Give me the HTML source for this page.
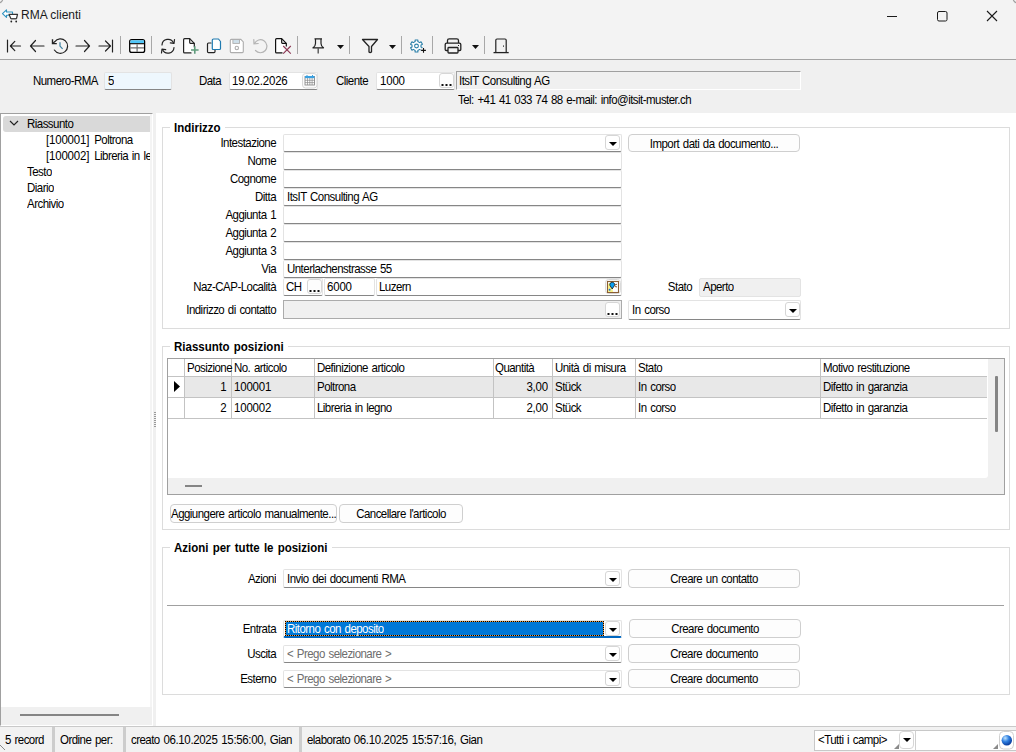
<!DOCTYPE html>
<html><head><meta charset="utf-8">
<style>
html,body{margin:0;padding:0;width:1016px;height:752px;overflow:hidden;background:#f3f3f3}
*{box-sizing:border-box}
body{font-family:"Liberation Sans",sans-serif;font-size:11.5px;color:#000;position:relative}
.a{position:absolute}
.t{position:absolute;white-space:nowrap;line-height:14px;letter-spacing:-0.54px;word-spacing:1px;transform:scaleY(1.13);transform-origin:0 11px}
.bt{display:inline-block;transform:scaleY(1.13);transform-origin:0 11px;letter-spacing:-0.54px;word-spacing:1px}
.r{text-align:right}
.n{letter-spacing:-0.2px}
.n2{letter-spacing:-0.35px}
.b{font-weight:bold;letter-spacing:0}
.inp{position:absolute;background:#fff;border:1px solid #e3e3e3;border-bottom:1px solid #868686;border-radius:2px}
.ro{position:absolute;background:#f0f0f0;border:1px solid #e3e3e3;border-radius:2px}
.btn{position:absolute;background:#fdfdfd;border:1px solid #cfcfcf;border-radius:4px;text-align:center;line-height:18px;white-space:nowrap}
.dd{position:absolute;background:#fff;border:1px solid #d6d6d6;border-radius:3px;width:15px;height:15px}
.dd:after{content:"";position:absolute;left:3px;top:6px;border-left:4px solid transparent;border-right:4px solid transparent;border-top:4px solid #000}
.gb{position:absolute;border:1px solid #dcdcdc}
.gt{position:absolute;background:#fff;padding:0 4px 0 4px;font-weight:bold;line-height:14px;white-space:nowrap;word-spacing:1px;transform:scaleY(1.12);transform-origin:0 11px}
.sep{position:absolute;width:1px;background:#a8a8a8}
</style></head><body>
<!-- title bar -->
<svg class="a" style="left:0;top:0" width="1016" height="30">
  <path d="M0.5 3 Q1 1 3 0.5" stroke="#9a9a9a" stroke-width="1.2" fill="none"/>
  <path d="M1013 0.5 Q1015 1 1015.5 3" stroke="#9a9a9a" stroke-width="1.2" fill="none"/>
  <!-- app icon: arrow + cart -->
  <path d="M6.5 9.8 L2.5 13.6 L6.5 17.4 L6.5 15.3 L12.5 15.3 L12.5 12 L6.5 12 Z" fill="#fff" stroke="#2f93c0" stroke-width="1.1" stroke-linejoin="round"/>
  <path d="M9 14.3 L17.5 14.3 L16.5 18.5 L10.8 18.5 Z" fill="#fff" stroke="#333" stroke-width="1.2" stroke-linejoin="round"/>
  <rect x="10.8" y="18.2" width="5.7" height="1.3" fill="#555"/>
  <circle cx="11.3" cy="21.5" r="0.9" fill="#222"/><circle cx="16.2" cy="21.5" r="0.9" fill="#222"/>
  <!-- window controls -->
  <rect x="887" y="16" width="10" height="1" fill="#1a1a1a"/>
  <rect x="937.5" y="11.5" width="9.5" height="9.5" rx="1.5" fill="none" stroke="#1a1a1a" stroke-width="1"/>
  <path d="M987 11 L997 21 M997 11 L987 21" stroke="#1a1a1a" stroke-width="1.1"/>
</svg>
<div class="t" style="left:21px;top:8px;font-size:12px;letter-spacing:0;word-spacing:0;transform:none;color:#1a1a1a">RMA clienti</div>

<!-- toolbar -->
<svg class="a" style="left:0;top:30px" width="520" height="29" viewBox="0 30 520 29">
  <g fill="none" stroke="#222" stroke-width="1.2" stroke-linecap="round" stroke-linejoin="round">
    <!-- |<- -->
    <path d="M7.5 40 V52"/><path d="M11 46 H20.5 M14.8 41.4 L10.4 46 L14.8 50.6"/>
    <!-- <- -->
    <path d="M30.5 46 H44 M35.5 40.5 L30.5 46 L35.5 51.5"/>
    <!-- history -->
    <path d="M54.36 50.02 A7.2 7.2 0 1 0 54.65 41.77 L52.8 43.4"/><path d="M52.5 39.3 V43.6 H56.8" stroke-linecap="butt" stroke-linejoin="miter" stroke-width="1.4"/>
    <path d="M60 42.3 V46.2 L62.6 48.8" stroke="#3a7fa0" stroke-linecap="butt"/>
    <!-- -> -->
    <path d="M76 46 H89.5 M84.5 40.5 L89.5 46 L84.5 51.5"/>
    <!-- ->| -->
    <path d="M99 46 H110 M105.5 41 L110.5 46 L105.5 51"/><path d="M112.5 40 V52"/>
  </g>
  <rect x="120" y="36" width="1" height="18" fill="#a8a8a8"/>
  <!-- table -->
  <rect x="129.7" y="39.6" width="14.9" height="12.8" rx="2" fill="#fff" stroke="#000" stroke-width="1.3"/>
  <rect x="130.4" y="40.3" width="13.5" height="2.9" fill="#4fc6f8"/>
  <path d="M130 43.7 H144.3" stroke="#000" stroke-width="1.1"/>
  <path d="M130.3 47.9 H144 M137.1 44.2 V52" stroke="#6e6e6e" stroke-width="1.2"/>
  <rect x="151" y="36" width="1" height="18" fill="#a8a8a8"/>
  <g fill="none" stroke="#222" stroke-width="1.2" stroke-linecap="round" stroke-linejoin="round">
    <!-- refresh -->
    <path d="M162 45 A6 6 0 0 1 173.5 43"/><path d="M174.5 39.5 L174 43.3 L170.3 42.8"/>
    <path d="M174 47.5 A6 6 0 0 1 162.5 49.5"/><path d="M161.5 53 L162 49.2 L165.7 49.7"/>
    <!-- new doc -->
    <path d="M191 52.9 H184.6 Q183.6 52.9 183.6 51.9 V39.7 Q183.6 38.7 184.6 38.7 H189.7 L194.3 43.3 V47" fill="#fff"/><path d="M189.7 38.9 V42.6 Q189.7 43.3 190.4 43.3 H194.2"/>
    <!-- copy -->
    <path d="M211 43 H208.5 Q207.5 43 207.5 44 V51.5 Q207.5 52.7 208.5 52.7 H214 Q215 52.7 215 51.5 V50"/>
  </g>
  <path d="M194.8 46.3 V53.7 M191 50 H198.6" stroke="#5f9c7c" stroke-width="1.6"/>
  <path d="M213 49.5 H219.5 Q220.5 49.5 220.5 48.5 V41.5 L218.5 39 H213.5 Q212.3 39 212.3 40 V48.5 Q212.3 49.5 213 49.5 Z" fill="#fff" stroke="#1f7ab0" stroke-width="1.2" stroke-linejoin="round"/>
  <!-- save (disabled) -->
  <path d="M231.3 39.4 H240.8 L243.3 41.9 V51.6 Q243.3 52.6 242.3 52.6 H231.3 Q230.3 52.6 230.3 51.6 V40.4 Q230.3 39.4 231.3 39.4 Z" fill="#fff" stroke="#adadad" stroke-width="1.1"/>
  <rect x="232.9" y="39.6" width="6.6" height="3.8" fill="#cfe0ea" stroke="#adadad" stroke-width="0.9"/>
  <circle cx="236.8" cy="48" r="1.7" fill="none" stroke="#adadad" stroke-width="1.1"/>
  <!-- undo (disabled) -->
  <path d="M254.5 43.5 A6.5 6.5 0 1 1 255.5 50.5" fill="none" stroke="#b4b4b4" stroke-width="1.2" stroke-linecap="round"/>
  <path d="M253.8 39.5 L254 43.8 L258.2 43.5" fill="none" stroke="#b4b4b4" stroke-width="1.2" stroke-linecap="round"/>
  <!-- delete doc -->
  <g fill="none" stroke="#111" stroke-width="1.2" stroke-linejoin="round">
    <path d="M282.5 52.9 H276.6 Q275.6 52.9 275.6 51.9 V39.7 Q275.6 38.7 276.6 38.7 H281.7 L286.3 43.3 V46.5" fill="#fff"/><path d="M281.7 38.9 V42.6 Q281.7 43.3 282.4 43.3 H286.2"/>
  </g>
  <path d="M283.2 46 L290.8 53.6 M290.8 46 L283.2 53.6" stroke="#8b3552" stroke-width="1.1"/>
  <rect x="297" y="36" width="1" height="18" fill="#a8a8a8"/>
  <!-- pin -->
  <path d="M314.5 38.8 H322 M315.5 39 V43.5 Q315.5 46 313 47.8 H323.5 Q321 46 321 43.5 V39" fill="none" stroke="#222" stroke-width="1.2" stroke-linejoin="round"/>
  <path d="M318.2 48 V53.5" stroke="#555" stroke-width="1.4"/>
  <path d="M337 45 H344 L340.5 49 Z" fill="#111"/>
  <rect x="349" y="36" width="1" height="18" fill="#a8a8a8"/>
  <!-- filter -->
  <path d="M362.5 39.5 H377.5 L371.5 46.5 V52 Q370 53 369 52 V46.5 Z" fill="none" stroke="#222" stroke-width="1.3" stroke-linejoin="round"/>
  <path d="M389 45 H396 L392.5 49 Z" fill="#111"/>
  <rect x="401" y="36" width="1" height="18" fill="#a8a8a8"/>
  <!-- gear -->
  <path d="M415.11 39.96 L417.89 39.96 L417.84 41.60 L419.64 42.64 L421.03 41.77 L422.43 44.19 L420.98 44.97 L420.98 47.03 L422.43 47.81 L421.03 50.23 L419.64 49.36 L417.84 50.40 L417.89 52.04 L415.11 52.04 L415.16 50.40 L413.36 49.36 L411.97 50.23 L410.57 47.81 L412.02 47.03 L412.02 44.97 L410.57 44.19 L411.97 41.77 L413.36 42.64 L415.16 41.60 Z" fill="#fff" stroke="#2a7fa8" stroke-width="1.1" stroke-linejoin="round"/>
  <circle cx="416.5" cy="46" r="1.9" fill="none" stroke="#2a7fa8" stroke-width="1.1"/>
  <circle cx="423.5" cy="50.4" r="3" fill="#f3f3f3"/>
  <path d="M423.5 48 V52.8 M421.1 50.4 H425.9" stroke="#111" stroke-width="1.1"/>
  <rect x="432" y="36" width="1" height="18" fill="#a8a8a8"/>
  <!-- printer -->
  <g fill="none" stroke="#222" stroke-width="1.3" stroke-linejoin="round">
    <path d="M447.5 43 V40.5 Q447.5 38.8 449.2 38.8 H456.8 Q458.5 38.8 458.5 40.5 V43"/>
    <path d="M448 50.5 H446.3 Q445.2 50.5 445.2 49.4 V44.6 Q445.2 43.2 446.6 43.2 H459.4 Q460.8 43.2 460.8 44.6 V49.4 Q460.8 50.5 459.7 50.5 H458"/>
    <rect x="448" y="47.5" width="10" height="5.5" rx="0.8"/>
  </g>
  <rect x="458" y="45" width="1" height="1" fill="#222"/>
  <path d="M472 45 H479 L475.5 49 Z" fill="#111"/>
  <rect x="484" y="36" width="1" height="18" fill="#a8a8a8"/>
  <!-- door -->
  <path d="M495.8 52.5 V40.3 Q495.8 39 497 39 H505 Q506.2 39 506.2 40.3 V52.5" fill="none" stroke="#222" stroke-width="1.2"/>
  <path d="M493.5 52.6 H508.7" stroke="#222" stroke-width="1.3"/>
  <rect x="503" y="45.5" width="1" height="1.2" fill="#222"/>
</svg>
<div class="a" style="left:0;top:59px;width:1016px;height:1px;background:#a3a3a3"></div>

<!-- header panel -->
<div class="a" style="left:0;top:60px;width:1016px;height:53px;background:#f0f0f0"></div>
<div class="t" style="left:33px;top:74px">Numero-RMA</div>
<div class="inp" style="left:104px;top:72px;width:68px;height:18px;background:#eef7fd"></div>
<div class="t" style="left:108px;top:74px">5</div>
<div class="t" style="left:199px;top:74px">Data</div>
<div class="inp" style="left:229px;top:72px;width:89px;height:18px"></div>
<div class="t n" style="left:232px;top:74px">19.02.2026</div>
<svg class="a" style="left:302px;top:73px" width="16" height="16">
  <rect x="0.5" y="0.5" width="14.5" height="14.5" rx="3" fill="#fbfbfb" stroke="#d8d8d8"/>
  <rect x="3" y="3.5" width="9.5" height="8.5" fill="#fff" stroke="#8a8a8a" stroke-width="0.9"/>
  <rect x="3" y="3" width="9.5" height="2.2" fill="#3aa0e0"/>
  <path d="M3 7.3 H12.5 M3 9.6 H12.5 M5.5 5 V12 M7.8 5 V12 M10.1 5 V12" stroke="#8a8a8a" stroke-width="0.7"/>
  <path d="M5 2 V4 M10.5 2 V4" stroke="#3aa0e0" stroke-width="1"/>
</svg>
<div class="t" style="left:336px;top:74px">Cliente</div>
<div class="inp" style="left:376px;top:72px;width:79px;height:18px"></div>
<div class="t n" style="left:380px;top:74px">1000</div>
<div class="a" style="left:439px;top:73px;width:15px;height:15px;background:#fdfdfd;border:1px solid #d6d6d6;border-radius:3px"></div>
<svg class="a" style="left:441px;top:84px" width="12" height="3"><rect x="0.5" y="0" width="2" height="2" fill="#111"/><rect x="4.5" y="0" width="2" height="2" fill="#111"/><rect x="8.5" y="0" width="2" height="2" fill="#111"/></svg>
<div class="a" style="left:456px;top:71px;width:345px;height:19px;background:#f0f0f0;border-top:1px solid #a0a0a0;border-left:1px solid #a0a0a0;border-bottom:1px solid #fff;border-right:1px solid #fff"></div>
<div class="t" style="left:459px;top:74px">ItsIT Consulting AG</div>
<div class="t" style="left:458px;top:93px">Tel: +41 41 033 74 88 e-mail: info@itsit-muster.ch</div>

<!-- TREE -->
<div class="a" style="left:0;top:113px;width:153px;height:613px;background:#fff;border-top:1px solid #a0a0a0;border-left:1px solid #a0a0a0;border-right:1px solid #fff;border-bottom:1px solid #fff"></div>
<div class="a" style="left:150px;top:114px;width:2px;height:593px;background:#f4f4f4"></div>
<div class="a" style="left:3px;top:116px;width:147px;height:16px;background:#d9d9d9;border-radius:3px 0 0 3px"></div>
<svg class="a" style="left:9px;top:119px" width="11" height="9"><path d="M1 2 L5 6 L9 2" fill="none" stroke="#222" stroke-width="1.2"/></svg>
<div class="t" style="left:27px;top:117px">Riassunto</div>
<div class="t" style="left:46px;top:133px"><span class="n">[100001]</span><span style="margin-left:5px">Poltrona</span></div>
<div class="a" style="left:46px;top:149px;width:104px;height:16px;overflow:hidden"><div class="t" style="left:0;top:0"><span class="n">[100002]</span><span style="margin-left:5px">Libreria in legno</span></div></div>
<div class="t" style="left:27px;top:165px">Testo</div>
<div class="t" style="left:27px;top:181px">Diario</div>
<div class="t" style="left:27px;top:197px">Archivio</div>
<div class="a" style="left:1px;top:707px;width:151px;height:18px;background:#f0f0f0"></div>
<div class="a" style="left:20px;top:714px;width:99px;height:2px;background:#858585"></div>
<!-- splitter -->
<div class="a" style="left:153px;top:113px;width:3px;height:613px;background:#f0f0f0"></div>
<svg class="a" style="left:153px;top:411px" width="3" height="17"><g fill="#9a9a9a"><rect x="1" y="1" width="2" height="1"/><rect x="1" y="3" width="2" height="1"/><rect x="1" y="5" width="2" height="1"/><rect x="1" y="7" width="2" height="1"/><rect x="1" y="9" width="2" height="1"/><rect x="1" y="11" width="2" height="1"/><rect x="1" y="13" width="2" height="1"/><rect x="1" y="15" width="2" height="1"/></g></svg>
<!-- MAIN -->
<div class="a" style="left:156px;top:113px;width:860px;height:613px;background:#fff"></div>
<!-- GROUP1 -->
<div class="gb" style="left:162px;top:127px;width:848px;height:202px"></div>
<div class="gt" style="left:170px;top:121px">Indirizzo</div>
<div class="t r" style="left:126px;width:150px;top:136px">Intestazione</div>
<div class="t r" style="left:126px;width:150px;top:154px">Nome</div>
<div class="t r" style="left:126px;width:150px;top:172px">Cognome</div>
<div class="t r" style="left:126px;width:150px;top:190px">Ditta</div>
<div class="t r" style="left:126px;width:150px;top:208px">Aggiunta 1</div>
<div class="t r" style="left:126px;width:150px;top:226px">Aggiunta 2</div>
<div class="t r" style="left:126px;width:150px;top:244px">Aggiunta 3</div>
<div class="t r" style="left:126px;width:150px;top:262px">Via</div>
<div class="t r" style="left:126px;width:150px;top:280px">Naz-CAP-Località</div>
<div class="t r" style="left:126px;width:150px;top:303px">Indirizzo di contatto</div>
<div class="inp" style="left:283px;top:134px;width:339px;height:18px"></div>
<div class="dd" style="left:605px;top:135px"></div>
<div class="inp" style="left:283px;top:152px;width:339px;height:18px"></div>
<div class="inp" style="left:283px;top:170px;width:339px;height:18px"></div>
<div class="inp" style="left:283px;top:188px;width:339px;height:18px"></div>
<div class="t" style="left:287px;top:190px">ItsIT Consulting AG</div>
<div class="inp" style="left:283px;top:206px;width:339px;height:18px"></div>
<div class="inp" style="left:283px;top:224px;width:339px;height:18px"></div>
<div class="inp" style="left:283px;top:242px;width:339px;height:18px"></div>
<div class="inp" style="left:283px;top:260px;width:339px;height:18px"></div>
<div class="t" style="left:287px;top:262px">Unterlachenstrasse 55</div>
<div class="inp" style="left:283px;top:278px;width:40px;height:18px"></div>
<div class="t" style="left:286px;top:280px">CH</div>
<div class="a" style="left:307px;top:279px;width:15px;height:15px;background:#fdfdfd;border:1px solid #d6d6d6;border-radius:3px"></div>
<svg class="a" style="left:309px;top:290px" width="12" height="3"><rect x="0.5" y="0" width="2" height="2" fill="#111"/><rect x="4.5" y="0" width="2" height="2" fill="#111"/><rect x="8.5" y="0" width="2" height="2" fill="#111"/></svg>
<div class="inp" style="left:324px;top:278px;width:51px;height:18px"></div>
<div class="t n" style="left:327px;top:280px">6000</div>
<div class="inp" style="left:376px;top:278px;width:246px;height:18px"></div>
<div class="t" style="left:379px;top:280px">Luzern</div>
<svg class="a" style="left:605px;top:279px" width="16" height="15" viewBox="605 279 16 15">
  <rect x="605.5" y="279.5" width="15" height="14" rx="3" fill="#fbfbfb" stroke="#dadada"/>
  <rect x="607.5" y="281.5" width="11" height="11" fill="#fff" stroke="#8b5e34" stroke-width="1.1"/>
  <path d="M608 292 L608 284 L611.5 282 L613 292 Z" fill="#f6f08a"/>
  <path d="M612.2 289 L610 285.6 A2.4 2.4 0 1 1 614.4 285.6 Z" fill="#0a9ef0" stroke="#111" stroke-width="0.8"/>
  <circle cx="609.6" cy="289.8" r="1" fill="#1a6ee0"/>
  <path d="M617 284.6 A1.3 1.3 0 1 0 617 286.6" fill="none" stroke="#7a4a2a" stroke-width="1"/>
</svg>
<div class="ro" style="left:283px;top:300px;width:339px;height:19px;border:1px solid #ababab;border-radius:0"></div>
<div class="a" style="left:605px;top:302px;width:15px;height:15px;background:#fff;border:1px solid #d6d6d6;border-radius:3px"></div>
<svg class="a" style="left:607px;top:313px" width="12" height="3"><rect x="0.5" y="0" width="2" height="2" fill="#111"/><rect x="4.5" y="0" width="2" height="2" fill="#111"/><rect x="8.5" y="0" width="2" height="2" fill="#111"/></svg>
<div class="btn" style="left:628px;top:134px;width:172px;height:18px"><span class="bt">Import dati da documento...</span></div>
<div class="t r" style="left:592px;width:100px;top:280px">Stato</div>
<div class="ro" style="left:699px;top:278px;width:102px;height:19px"></div>
<div class="t" style="left:703px;top:280px">Aperto</div>
<div class="inp" style="left:628px;top:300px;width:173px;height:20px"></div>
<div class="t" style="left:632px;top:303px">In corso</div>
<div class="dd" style="left:785px;top:302px"></div>
<!-- GROUP2 -->
<div class="gb" style="left:162px;top:346px;width:848px;height:184px"></div>
<div class="gt" style="left:170px;top:340px">Riassunto posizioni</div>
<div class="a" style="left:167px;top:358px;width:838px;height:137px;border:1px solid #a0a0a0;background:#f0f0f0"></div>
<div class="a" style="left:168px;top:359px;width:820px;height:119px;background:#fff;border-bottom-right-radius:3px"></div>
<div class="a" style="left:185px;top:377px;width:802px;height:20px;background:#e8e8e8"></div>
<div class="a" style="left:168px;top:376px;width:819px;height:1px;background:#c3c3c3"></div>
<div class="a" style="left:168px;top:397px;width:819px;height:1px;background:#c3c3c3"></div>
<div class="a" style="left:168px;top:418px;width:819px;height:1px;background:#c3c3c3"></div>
<div class="a" style="left:184px;top:359px;width:1px;height:59px;background:#c3c3c3"></div>
<div class="a" style="left:231px;top:359px;width:1px;height:59px;background:#c3c3c3"></div>
<div class="a" style="left:314px;top:359px;width:1px;height:59px;background:#c3c3c3"></div>
<div class="a" style="left:493px;top:359px;width:1px;height:59px;background:#c3c3c3"></div>
<div class="a" style="left:552px;top:359px;width:1px;height:59px;background:#c3c3c3"></div>
<div class="a" style="left:635px;top:359px;width:1px;height:59px;background:#c3c3c3"></div>
<div class="a" style="left:820px;top:359px;width:1px;height:59px;background:#c3c3c3"></div>
<div class="t" style="left:187px;top:361px">Posizione</div>
<div class="t" style="left:234px;top:361px">No. articolo</div>
<div class="t" style="left:317px;top:361px">Definizione articolo</div>
<div class="t" style="left:495px;top:361px">Quantità</div>
<div class="t" style="left:555px;top:361px">Unità di misura</div>
<div class="t" style="left:638px;top:361px">Stato</div>
<div class="t" style="left:823px;top:361px">Motivo restituzione</div>
<svg class="a" style="left:173px;top:380px" width="9" height="13"><path d="M1 1 L7 6.5 L1 12 Z" fill="#000"/></svg>
<div class="t r" style="left:185px;width:41px;top:380px">1</div>
<div class="t n" style="left:234px;top:380px">100001</div>
<div class="t" style="left:317px;top:380px">Poltrona</div>
<div class="t r n" style="left:494px;width:54px;top:380px">3,00</div>
<div class="t" style="left:555px;top:380px">Stück</div>
<div class="t" style="left:638px;top:380px">In corso</div>
<div class="t" style="left:823px;top:380px">Difetto in garanzia</div>
<div class="t r" style="left:185px;width:41px;top:401px">2</div>
<div class="t n" style="left:234px;top:401px">100002</div>
<div class="t" style="left:317px;top:401px">Libreria in legno</div>
<div class="t r n" style="left:494px;width:54px;top:401px">2,00</div>
<div class="t" style="left:555px;top:401px">Stück</div>
<div class="t" style="left:638px;top:401px">In corso</div>
<div class="t" style="left:823px;top:401px">Difetto in garanzia</div>
<div class="a" style="left:995px;top:376px;width:3px;height:56px;background:#858585;border-radius:1px"></div>
<div class="a" style="left:185px;top:485px;width:17px;height:2px;background:#858585"></div>
<div class="btn" style="left:170px;top:504px;width:167px;height:19px;line-height:19px"><span class="bt">Aggiungere articolo manualmente...</span></div>
<div class="btn" style="left:339px;top:504px;width:124px;height:19px;line-height:19px"><span class="bt">Cancellare l'articolo</span></div>
<!-- GROUP3 -->
<div class="gb" style="left:162px;top:547px;width:848px;height:148px"></div>
<div class="gt" style="left:170px;top:541px">Azioni per tutte le posizioni</div>
<div class="t r" style="left:126px;width:150px;top:572px">Azioni</div>
<div class="inp" style="left:283px;top:569px;width:339px;height:19px"></div>
<div class="t" style="left:287px;top:572px">Invio dei documenti RMA</div>
<div class="dd" style="left:605px;top:571px"></div>
<div class="btn" style="left:628px;top:569px;width:172px;height:19px;line-height:19px"><span class="bt">Creare un contatto</span></div>
<div class="a" style="left:167px;top:605px;width:837px;height:1px;background:#a0a0a0"></div>
<div class="t r" style="left:126px;width:150px;top:622px">Entrata</div>
<div class="inp" style="left:283px;top:620px;width:339px;height:18px;border-bottom:2px solid #0067c0"></div>
<div class="a" style="left:285px;top:621px;width:319px;height:15px;background:#0078d7;border:1px solid #f39a3a"></div>
<div class="a" style="left:285px;top:621px;width:319px;height:15px;border:1px dotted #000"></div>
<div class="t" style="left:287px;top:622px;color:#fff">Ritorno con deposito</div>
<div class="dd" style="left:605px;top:621px"></div>
<div class="btn" style="left:629px;top:619px;width:172px;height:19px;line-height:19px"><span class="bt">Creare documento</span></div>
<div class="t r" style="left:126px;width:150px;top:647px">Uscita</div>
<div class="inp" style="left:283px;top:645px;width:339px;height:18px"></div>
<div class="t" style="left:287px;top:647px;color:#6d6d6d">&lt; Prego selezionare &gt;</div>
<div class="dd" style="left:605px;top:646px"></div>
<div class="btn" style="left:628px;top:644px;width:172px;height:19px;line-height:19px"><span class="bt">Creare documento</span></div>
<div class="t r" style="left:126px;width:150px;top:672px">Esterno</div>
<div class="inp" style="left:283px;top:670px;width:339px;height:18px"></div>
<div class="t" style="left:287px;top:672px;color:#6d6d6d">&lt; Prego selezionare &gt;</div>
<div class="dd" style="left:605px;top:671px"></div>
<div class="btn" style="left:628px;top:669px;width:172px;height:19px;line-height:19px"><span class="bt">Creare documento</span></div>
<!-- STATUS -->
<div class="a" style="left:0;top:726px;width:1016px;height:26px;background:#f2f2f2;border-top:1px solid #c9c9c9"></div>
<div class="a" style="left:52px;top:727px;width:3px;height:25px;background:#cdcdcd"></div>
<div class="a" style="left:123px;top:727px;width:3px;height:25px;background:#cdcdcd"></div>
<div class="a" style="left:299px;top:727px;width:3px;height:25px;background:#cdcdcd"></div>
<div class="t" style="left:5px;top:733px">5 record</div>
<div class="t" style="left:60px;top:733px">Ordine per:</div>
<div class="t" style="left:131px;top:733px">creato <span class="n2">06.10.2025 15:56:00,</span> Gian</div>
<div class="t" style="left:307px;top:733px">elaborato <span class="n2">06.10.2025 15:57:16,</span> Gian</div>
<div class="a" style="left:814px;top:730px;width:102px;height:21px;background:#fff;border:1px solid #c8c8c8"></div>
<div class="t" style="left:818px;top:733px">&lt;Tutti i campi&gt;</div>
<div class="dd" style="left:899px;top:731px;height:18px;width:15px;border-radius:4px"></div>
<div class="a" style="left:915px;top:730px;width:101px;height:21px;background:#fff;border:1px solid #c8c8c8;border-left:1px solid #d0d0d0;border-right:none"></div>
<svg class="a" style="left:999px;top:731px" width="16" height="19">
  <rect x="0.5" y="0.5" width="14" height="17.5" rx="4" fill="#fff" stroke="#d0d0d0"/>
  <defs><radialGradient id="gl" cx="0.35" cy="0.3" r="0.7"><stop offset="0" stop-color="#bfe4ff"/><stop offset="0.5" stop-color="#2f7fe0"/><stop offset="1" stop-color="#0a3fa0"/></radialGradient></defs>
  <circle cx="7.8" cy="9.2" r="5.2" fill="url(#gl)"/>
</svg>
<svg class="a" style="left:894px;top:744px" width="6" height="6"><path d="M5 0 L5 5 L0 5 Z" fill="#8a8a8a"/></svg>
<svg class="a" style="left:993px;top:744px" width="6" height="6"><path d="M5 0 L5 5 L0 5 Z" fill="#8a8a8a"/></svg>
<svg class="a" style="left:0;top:744px" width="6" height="8"><path d="M0 1 L5 6" stroke="#8a8a8a" stroke-width="1"/></svg>
</body></html>
